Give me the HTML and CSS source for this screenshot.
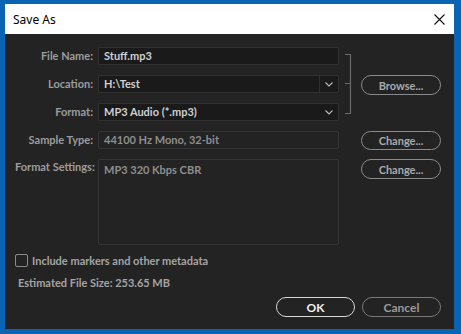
FILE: index.html
```html
<!DOCTYPE html>
<html>
  <head>
    <title>Save As</title>
    <link rel="stylesheet" href="styles.css">
  </head>
  <body>
    <div class="dialog">
      <div class="titlebar">
        <span class="title">Save As</span>
        <svg class="close" width="11" height="11" viewBox="0 0 11 11">
          <path d="M0.5 0.5 L10.5 10.5 M10.5 0.5 L0.5 10.5" stroke="#111" stroke-width="1.1" fill="none" />
        </svg>
      </div>

      <div class="content">
        <div class="form">
          <label class="label">File Name:</label>
          <div class="field">Stuff.mp3</div>
          <div class="bracket">
            <svg width="22" height="71" viewBox="0 0 22 71">
              <path d="M6 7.5 H11.5 V66.5 H6 M6 36.5 H11.5" stroke="#6b6b6b" stroke-width="1.2" fill="none" />
            </svg>
          </div>

          <label class="label">Location:</label>
          <div class="field select">
            <span class="value">H:\Test</span>
            <span class="arrow divided">
              <svg width="8" height="5" viewBox="0 0 8 5"><path d="M0.5 0.5 L4 4 L7.5 0.5" stroke="#bbb" stroke-width="1.1" fill="none" /></svg>
            </span>
          </div>
          <button class="button browse">Browse...</button>

          <label class="label">Format:</label>
          <div class="field select">
            <span class="value">MP3 Audio (*.mp3)</span>
            <span class="arrow">
              <svg width="8" height="5" viewBox="0 0 8 5"><path d="M0.5 0.5 L4 4 L7.5 0.5" stroke="#bbb" stroke-width="1.1" fill="none" /></svg>
            </span>
          </div>

          <label class="label">Sample Type:</label>
          <div class="field disabled">44100 Hz Mono, 32-bit</div>
          <button class="button change">Change...</button>

          <label class="label top">Format Settings:</label>
          <div class="field disabled area">MP3 320 Kbps CBR</div>
          <button class="button change top">Change...</button>
        </div>

        <div class="check-row">
          <span class="checkbox"></span>
          <span>Include markers and other metadata</span>
        </div>

        <div class="filesize">Estimated File Size: 253.65 MB</div>

        <div class="actions">
          <button class="button ok">OK</button>
          <button class="button cancel">Cancel</button>
        </div>
      </div>
    </div>
  </body>
</html>
```

FILE: styles.css
```css
body {
  margin: 0;
  padding: 4px 7px 5px 5px;
  background-color: #0a64b4;
  font-family: "Lato", "Open Sans", sans-serif;
  font-size: 11px;
  height: 334px;
  box-sizing: border-box;
}

.dialog {
  display: flex;
  flex-direction: column;
  height: 100%;
}

.titlebar {
  height: 30px;
  background-color: #fff;
  display: flex;
  align-items: center;
  justify-content: space-between;
  padding: 0 9px 0 8px;
}

.title {
  font-family: "Noto Sans", sans-serif;
  font-size: 12px;
  color: #000;
}

.close {
  display: block;
}

.content {
  flex: 1;
  background-color: #232323;
  padding: 13px 13px 12px 10px;
  display: flex;
  flex-direction: column;
}

.form {
  display: grid;
  grid-template-columns: 83px 241px 22px 80px;
  grid-template-rows: 18px 18px 18px 18px 86px;
  row-gap: 10px;
}

.label {
  grid-column: 1;
  color: #9c9c9c;
  text-align: right;
  padding-right: 5px;
  line-height: 18px;
  white-space: nowrap;
  font-weight: bold;
}

.label.top {
  line-height: 16px;
}

.field {
  grid-column: 2;
  background-color: #1a1a1a;
  border: 1px solid #303030;
  border-radius: 2px;
  color: #cfcfcf;
  padding: 0 5px;
  line-height: 16px;
  box-sizing: border-box;
  font-weight: bold;
}

.select {
  display: flex;
  padding-right: 0;
}

.select .value {
  flex: 1;
}

.arrow {
  width: 18px;
  display: flex;
  align-items: center;
  justify-content: center;
}

.arrow.divided {
  border-left: 1px solid #303030;
}

.arrow svg {
  display: block;
}

.disabled {
  background-color: #232323;
  border-color: #353535;
  color: #8e8e8e;
}

.area {
  padding-top: 2px;
}

.bracket {
  grid-column: 3;
  grid-row: 1 / 4;
}

.bracket svg {
  display: block;
}

.button {
  grid-column: 4;
  height: 19px;
  border: 1.5px solid #8a8a8a;
  border-radius: 10px;
  background-color: transparent;
  color: #a9a9a9;
  font-family: "Lato", "Open Sans", sans-serif;
  font-size: 11px;
  font-weight: bold;
  padding: 0;
}

.browse {
  height: 20px;
}

.change.top {
  align-self: start;
  height: 20px;
}

.check-row {
  margin-top: 9px;
  display: flex;
  align-items: center;
  gap: 4px;
  color: #a3a3a3;
  font-weight: bold;
}

.checkbox {
  width: 11px;
  height: 11px;
  border: 1.5px solid #8a8a8a;
  border-radius: 2px;
}

.filesize {
  margin-top: 9px;
  margin-left: 3px;
  color: #a3a3a3;
  font-weight: bold;
}

.actions {
  margin-top: auto;
  display: flex;
  justify-content: flex-end;
  gap: 7px;
}

.actions .button {
  width: 79px;
  height: 20px;
  font-size: 12px;
}

.ok {
  border-color: #d8d8d8;
  color: #f0f0f0;
}

.cancel {
  border-color: #7a7a7a;
  color: #9a9a9a;
}
```
